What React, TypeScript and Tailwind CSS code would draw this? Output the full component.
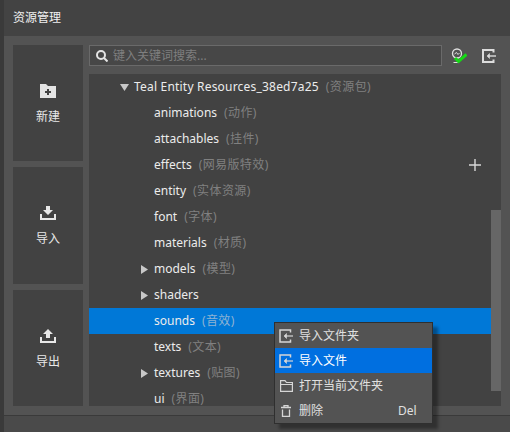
import React from "react";

const font = { fontFamily: '"Noto Sans", "Noto Sans CJK SC", sans-serif' };

const rows: { name: string; zh?: string; arrow?: "down" | "right"; depth?: number; active?: boolean; plus?: boolean }[] = [
  { name: "Teal Entity Resources_38ed7a25", zh: "(资源包)", arrow: "down", depth: 0 },
  { name: "animations", zh: "(动作)" },
  { name: "attachables", zh: "(挂件)" },
  { name: "effects", zh: "(网易版特效)", plus: true },
  { name: "entity", zh: "(实体资源)" },
  { name: "font", zh: "(字体)" },
  { name: "materials", zh: "(材质)" },
  { name: "models", zh: "(模型)", arrow: "right" },
  { name: "shaders", arrow: "right" },
  { name: "sounds", zh: "(音效)", active: true },
  { name: "texts", zh: "(文本)" },
  { name: "textures", zh: "(贴图)", arrow: "right" },
  { name: "ui", zh: "(界面)" },
];

function ImportIcon({ className = "", thin = false }: { className?: string; thin?: boolean }) {
  return (
    <svg width="14" height="14" viewBox="0 0 14 14" className={className} fill="none" stroke="currentColor">
      <path d="M11.5 3.5V1H1V13H11.5V10.5" strokeWidth={thin ? 1.5 : 2} />
      <path d="M14 7H6" strokeWidth={thin ? 1.2 : 1.4} />
      <path d="M7.5 4.5L5 7L7.5 9.5Z" fill="currentColor" strokeWidth="0.6" />
    </svg>
  );
}

function SideButton({ label, children }: { label: string; children: React.ReactNode }) {
  return (
    <button className="flex flex-col flex-1 items-center justify-center gap-[11px] bg-[#424242] text-[#e8e8e8] text-[12px] leading-[16px] pt-[3px]">
      {children}
      <span>{label}</span>
    </button>
  );
}

function Tree() {
  return (
    <div className="relative flex-1 bg-[#424242] overflow-hidden">
      {rows.map((r) => (
        <div key={r.name} className={`relative flex items-center h-[26px] text-[12px] leading-[14px] ${r.active ? "bg-[#0078d7]" : ""}`}>
          {r.arrow === "down" && (
            <svg width="9" height="7" viewBox="0 0 9 7" className="absolute left-[31px] top-[10px]">
              <path d="M0 0H9L4.5 7Z" fill="#c8c8c8" />
            </svg>
          )}
          {r.arrow === "right" && (
            <svg width="7" height="9" viewBox="0 0 7 9" className="absolute left-[52px] top-[9px]">
              <path d="M0 0V9L7 4.5Z" fill="#c8c8c8" />
            </svg>
          )}
          <span className={`text-[#ececec] whitespace-pre ${r.depth === 0 ? "ml-[45px] tracking-[0.2px]" : "ml-[65px]"}`}>{r.name}</span>
          {r.zh && <span className={`ml-[7px] whitespace-pre tracking-[0.4px] ${r.active ? "text-[#8fb3d3]" : "text-[#808080]"}`}>{r.zh}</span>}
          {r.plus && (
            <svg width="12" height="12" viewBox="0 0 12 12" className="absolute left-[380px] top-[7px]">
              <path d="M6 0V12M0 6H12" stroke="#d8d8d8" strokeWidth="1.4" />
            </svg>
          )}
        </div>
      ))}
      <div className="absolute right-0 top-[136px] w-[10px] h-[181px] bg-[#666666]" />
    </div>
  );
}

function Menu() {
  const items = [
    { label: "导入文件夹", icon: <ImportIcon thin /> },
    { label: "导入文件", icon: <ImportIcon thin />, active: true },
    {
      label: "打开当前文件夹",
      icon: (
        <svg width="13" height="12" viewBox="0 0 13 12" fill="none" stroke="currentColor" strokeWidth="1.2">
          <path d="M0.6 11.4V0.6H5L6.5 2.5H12.4V11.4Z M0.6 4.5H12.4" />
        </svg>
      ),
    },
    {
      label: "删除",
      shortcut: "Del",
      icon: (
        <svg width="10" height="12" viewBox="0 0 10 12" fill="none" stroke="currentColor" strokeWidth="1.3">
          <path d="M0 2.5H10M3 2.5V0.7H7V2.5M1.5 4.5V11.3H8.5V4.5" />
        </svg>
      ),
    },
  ];
  return (
    <div className="absolute left-[274px] top-[322px] w-[159px] h-[102px] bg-[#535353] border border-[#2f2f2f] shadow-[5px_5px_3px_rgba(0,0,0,0.35)] text-[12px] text-[#e0e0e0]">
      {items.map((it) => (
        <div key={it.label} className={`relative flex items-center h-[25px] ${it.active ? "bg-[#006fe0] text-white" : ""}`}>
          <span className="flex justify-center w-[22px] text-[#d6d6d6]">{it.icon}</span>
          <span className="ml-[2px]">{it.label}</span>
          {it.shortcut && <span className="absolute left-[123px]">{it.shortcut}</span>}
        </div>
      ))}
    </div>
  );
}

export default function App() {
  return (
    <div style={font} className="relative flex w-[510px] h-[432px] overflow-hidden bg-[#4a4a4a]">
      <div className="w-[4px] bg-[#3a3a3a]" />
      <div className="flex flex-col flex-1 min-w-0">
        <div className="flex items-center h-[36px] pl-[9px] bg-[#434343] text-[12px] text-[#f0f0f0]">资源管理</div>
        <div className="flex gap-[6px] h-[380px] bg-[#535353] pl-[9px] pr-[9px] pt-[9px] pb-[9px] border-b border-[#3a3a3a]">
          <div className="flex flex-col gap-[6px] w-[70px]">
            <SideButton label="新建">
              <svg width="16" height="14" viewBox="0 0 16 14">
                <path d="M0 0H6L8 2H16V14H0Z" fill="#e4e4e4" />
                <path d="M8 5V11M5 8H11" stroke="#424242" strokeWidth="2" />
              </svg>
            </SideButton>
            <SideButton label="导入">
              <svg width="16" height="14" viewBox="0 0 16 14" fill="#e8e8e8">
                <path d="M6 0H10V4H13L8 9L3 4H6Z" />
                <path d="M0 8H2V12H14V8H16V14H0Z" />
              </svg>
            </SideButton>
            <SideButton label="导出">
              <svg width="16" height="14" viewBox="0 0 16 14" fill="#e8e8e8">
                <path d="M6 9H10V5H13L8 0L3 5H6Z" />
                <path d="M0 8H2V12H14V8H16V14H0Z" />
              </svg>
            </SideButton>
          </div>
          <div className="flex flex-col flex-1 gap-[8px] min-w-0">
            <div className="flex items-center h-[21px]">
              <div className="flex items-center w-[353px] h-[21px] border border-[#6a6a6a] bg-[#474747] text-[12px] text-[#7f7f7f]">
                <svg width="12" height="12" viewBox="0 0 12 12" fill="none" stroke="#e4e4e4" strokeWidth="2" className="ml-[6px]">
                  <circle cx="5" cy="5" r="4" />
                  <path d="M8 8L11.5 11.5" />
                </svg>
                <span className="ml-[5px]">键入关键词搜索...</span>
              </div>
              <svg width="16" height="16" viewBox="0 0 16 16" fill="none" className="ml-[9px]">
                <circle cx="6" cy="5.5" r="4.5" stroke="#e0e0e0" strokeWidth="1.3" />
                <path d="M3.5 6L5.5 4.5L7 6.5L8.5 5" stroke="#e0e0e0" />
                <path d="M2.5 14.5H8" stroke="#e0e0e0" />
                <path d="M4 10L7.5 13.5L15.5 6.5" stroke="#16d916" strokeWidth="3" />
              </svg>
              <ImportIcon className="ml-[15px] text-[#dcdcdc]" />
            </div>
            <Tree />
          </div>
        </div>
      </div>
      <Menu />
    </div>
  );
}
